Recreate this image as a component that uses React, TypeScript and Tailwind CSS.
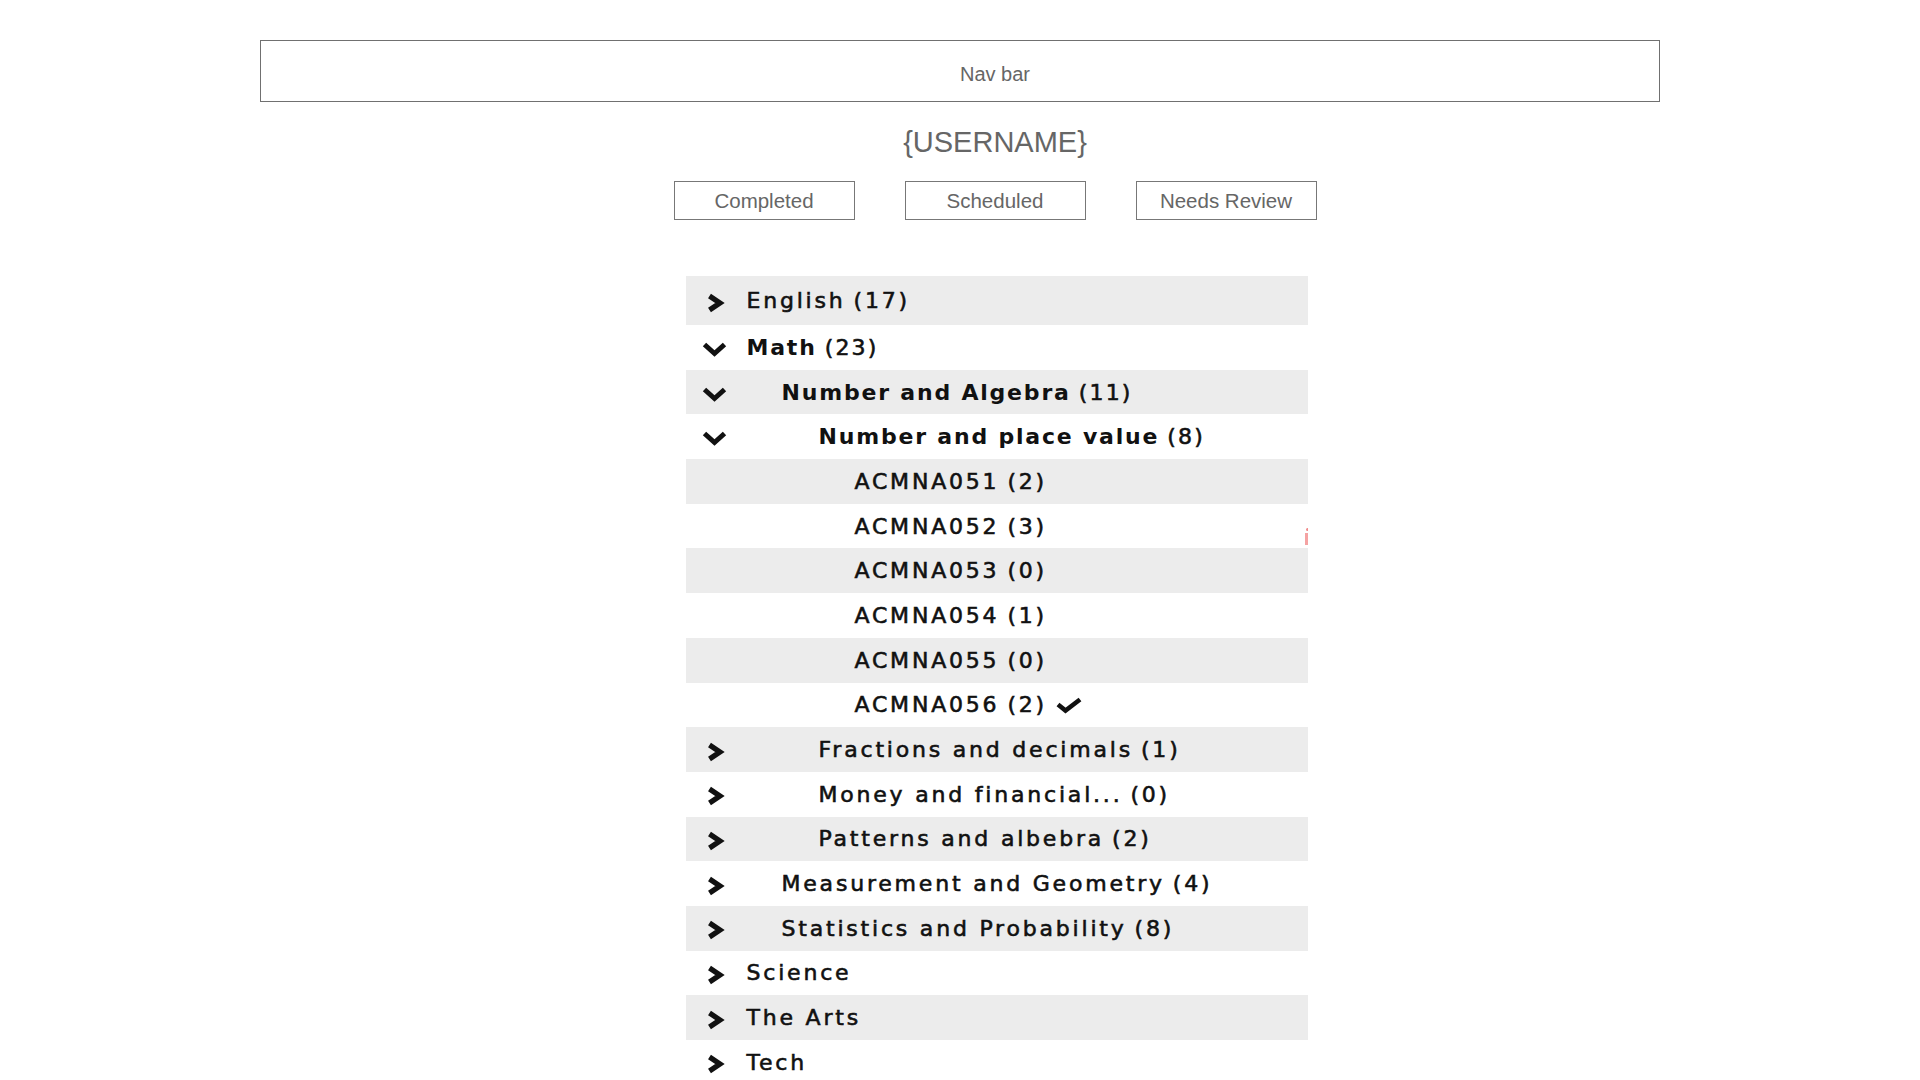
import React from 'react';

type Row = {
  name: string;
  count?: string;
  level: number;
  icon: 'right' | 'down' | 'none';
  bold?: boolean;
  check?: boolean;
  flag?: boolean;
};

const ROWS: Row[] = [
  { name: 'English', count: '(17)', level: 0, icon: 'right' },
  { name: 'Math', count: '(23)', level: 0, icon: 'down', bold: true },
  { name: 'Number and Algebra', count: '(11)', level: 1, icon: 'down', bold: true },
  { name: 'Number and place value', count: '(8)', level: 2, icon: 'down', bold: true },
  { name: 'ACMNA051', count: '(2)', level: 3, icon: 'none' },
  { name: 'ACMNA052', count: '(3)', level: 3, icon: 'none', flag: true },
  { name: 'ACMNA053', count: '(0)', level: 3, icon: 'none' },
  { name: 'ACMNA054', count: '(1)', level: 3, icon: 'none' },
  { name: 'ACMNA055', count: '(0)', level: 3, icon: 'none' },
  { name: 'ACMNA056', count: '(2)', level: 3, icon: 'none', check: true },
  { name: 'Fractions and decimals', count: '(1)', level: 2, icon: 'right' },
  { name: 'Money and financial...', count: '(0)', level: 2, icon: 'right' },
  { name: 'Patterns and albebra', count: '(2)', level: 2, icon: 'right' },
  { name: 'Measurement and Geometry', count: '(4)', level: 1, icon: 'right' },
  { name: 'Statistics and Probability', count: '(8)', level: 1, icon: 'right' },
  { name: 'Science', level: 0, icon: 'right' },
  { name: 'The Arts', level: 0, icon: 'right' },
  { name: 'Tech', level: 0, icon: 'right' },
];

const INDENT = ['ml-[18px]', 'ml-[53px]', 'ml-[90px]', 'ml-[126px]'];

const ChevronRight = () => (
  <svg width="20" height="20" viewBox="0 0 20 20" className="translate-y-[2px]">
    <polyline points="4.5,3 15,10 4.5,17" fill="none" stroke="#111" strokeWidth="5.2" strokeLinejoin="miter" />
  </svg>
);

const ChevronDown = () => (
  <svg width="25" height="15" viewBox="0 0 25 15" className="translate-y-[2px]">
    <polyline points="2.5,2.5 12.5,11.5 22.5,2.5" fill="none" stroke="#111" strokeWidth="5" strokeLinejoin="miter" />
  </svg>
);

const Check = () => (
  <svg width="28" height="18" viewBox="0 0 28 18" className="ml-[8px]">
    <polyline points="3,8.5 10.5,14.5 25,3.5" fill="none" stroke="#111" strokeWidth="4.6" />
  </svg>
);

const TreeRow: React.FC<{ row: Row; index: number }> = ({ row, index }) => (
  <div
    className={`relative flex items-center pl-[15px] ${index === 0 ? 'h-[49px]' : 'h-[44.7px]'} ${
      index % 2 === 0 ? 'bg-[#ececec]' : 'bg-white'
    }`}
  >
    <div className="w-[28px] flex justify-center items-center">
      {row.icon === 'right' && <ChevronRight />}
      {row.icon === 'down' && <ChevronDown />}
    </div>
    <div className={`${INDENT[row.level]} flex items-center text-[22px] text-[#111] whitespace-nowrap`}>
      <span
        className={
          row.bold
            ? 'font-bold tracking-[1.8px]'
            : 'font-normal tracking-[2.8px] [-webkit-text-stroke:0.6px_#111]'
        }
      >
        {row.name}
      </span>
      {row.count && (
        <span
          className={`ml-[8px] font-normal [-webkit-text-stroke:0.6px_#111] ${
            row.bold ? 'tracking-[2.2px]' : 'tracking-[2.8px]'
          }`}
        >
          {row.count}
        </span>
      )}
      {row.check && <Check />}
    </div>
    {row.flag && (
      <span className="absolute right-0 top-[24px] w-[4px] h-[18px] overflow-hidden">
        <span className="block w-[3px] h-[3px] ml-[2px] rounded-full bg-[#f08a8a]" />
        <span className="block w-[3px] h-[12px] ml-[1px] mt-[2px] bg-[#f5a3a3]" />
      </span>
    )}
  </div>
);

export default function App() {
  return (
    <div className="min-h-screen bg-white pt-[40px]" style={{ fontFamily: '"Liberation Sans", Arial, sans-serif' }}>
      {/* Nav bar */}
      <div className="ml-[260px] w-[1400px] h-[62px] border border-[#707070] pt-[22px] pl-[70px] text-center text-[20px] leading-[22px] text-[#666]">
        Nav bar
      </div>

      <div className="flex flex-col items-center pl-[70px]">
        <h1 className="mt-[24px] text-[29px] leading-[32px] font-normal text-[#666]">{'{USERNAME}'}</h1>

        <div className="mt-[23px] flex gap-[50px]">
          {['Completed', 'Scheduled', 'Needs Review'].map((label) => (
            <div
              key={label}
              className="w-[181px] h-[39px] border border-[#777] flex items-center justify-center pt-[2px] text-[20.5px] text-[#666]"
            >
              {label}
            </div>
          ))}
        </div>

        <div
          className="mt-[56px] ml-[3px] w-[622px] flex flex-col"
          style={{ fontFamily: '"DejaVu Sans", Verdana, sans-serif' }}
        >
          {ROWS.map((row, i) => (
            <TreeRow key={row.name} row={row} index={i} />
          ))}
        </div>
      </div>
    </div>
  );
}
